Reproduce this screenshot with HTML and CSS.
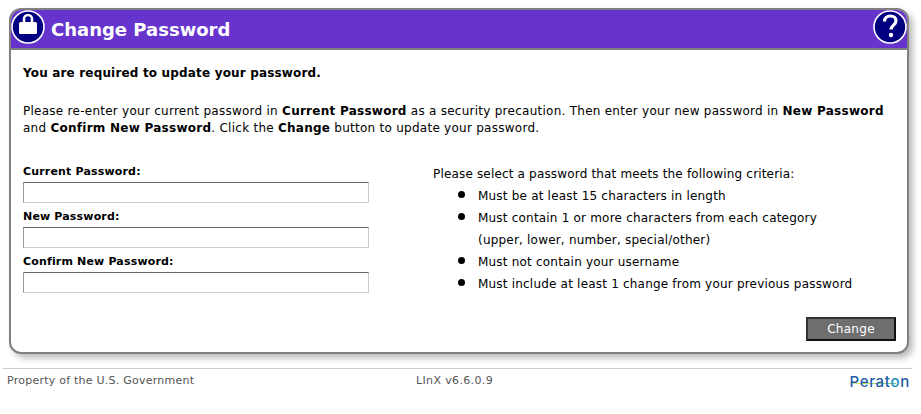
FILE: index.html
```html
<!DOCTYPE html>
<html lang="en">
<head>
<meta charset="utf-8">
<title>Change Password</title>
<link rel="stylesheet" href="styles.css">
</head>
<body>
<main class="panel">
  <header class="head">
    <svg class="badge" viewBox="0 0 34 34" width="34" height="34" aria-hidden="true">
      <circle cx="17" cy="17" r="16" fill="#000080" stroke="#fff" stroke-width="1.600"/>
      <path d="M13 13V9a4 4 0 0 1 8 0v4" fill="none" stroke="#fff" stroke-width="2.600"/>
      <rect x="8" y="12" width="18" height="12" rx="1.500" fill="#fff"/>
    </svg>
    <h1 class="title">Change Password</h1>
    <svg class="badge" viewBox="0 0 34 34" width="34" height="34" aria-hidden="true">
      <circle cx="17" cy="17" r="16" fill="#000080" stroke="#fff" stroke-width="1.600"/>
      <path d="M11.500 11.500c0-3.400 2.400-5.500 5.800-5.500 3.300 0 5.700 1.900 5.700 4.800 0 4.400-5 4.200-5 8.700" fill="none" stroke="#fff" stroke-width="3.200"/>
      <circle cx="18" cy="25" r="2.200" fill="#fff"/>
    </svg>
  </header>
  <div class="body">
    <p class="required">You are required to update your password.</p>
    <p class="intro">Please re-enter your current password in <b>Current Password</b> as a security precaution. Then enter your new password in <b>New Password</b> and <b>Confirm New Password</b>. Click the <b>Change</b> button to update your password.</p>
    <div class="columns">
      <form class="fields">
        <label class="label" for="cur">Current Password:</label>
        <input class="input" id="cur" type="password">
        <label class="label" for="new">New Password:</label>
        <input class="input" id="new" type="password">
        <label class="label" for="conf">Confirm New Password:</label>
        <input class="input" id="conf" type="password">
      </form>
      <div class="criteria">
        <p class="criteria-head">Please select a password that meets the following criteria:</p>
        <ul class="list">
          <li>Must be at least 15 characters in length</li>
          <li>Must contain 1 or more characters from each category<br>(upper, lower, number, special/other)</li>
          <li>Must not contain your username</li>
          <li>Must include at least 1 change from your previous password</li>
        </ul>
      </div>
    </div>
    <div class="actions"><button class="btn" type="button">Change</button></div>
  </div>
</main>
<footer class="foot">
  <span class="foot-left">Property of the U.S. Government</span>
  <span class="foot-mid">LInX v6.6.0.9</span>
  <span class="logo">Perat<span class="logo-o">o</span>n</span>
</footer>
</body>
</html>
```
FILE: styles.css
```css
* { box-sizing: border-box; }
html, body { margin: 0; padding: 0; background: #fff; }
body {
  width: 921px;
  height: 414px;
  overflow: hidden;
  padding-top: 8px;
  font-family: "DejaVu Sans", Verdana, sans-serif;
  font-size: 12px;
  letter-spacing: 0.17px;
  color: #000;
}
.panel {
  width: 900px;
  height: 346px;
  margin-left: 9px;
  border: 2px solid #808080;
  border-radius: 12px;
  box-shadow: 4px 4px 6px #bbb;
  background: #fff;
  overflow: hidden;
}
.head {
  height: 40px;
  display: flex;
  align-items: flex-start;
  justify-content: space-between;
  background: #6633cc;
  border-bottom: 2px solid #808080;
}
.badge { flex: none; }
.title {
  flex: 1;
  margin: 0 0 0 6px;
  font-size: 18px;
  font-weight: bold;
  letter-spacing: 0;
  color: #fff;
  line-height: 40px;
}
.body { padding: 0 12px; }
.required { margin: 15px 0 0; font-weight: bold; line-height: 16px; }
.intro { margin: 22px 0 0; line-height: 17px; letter-spacing: 0.26px; }
.columns { display: flex; margin-top: 27px; }
.fields { width: 410px; display: flex; flex-direction: column; }
.label { font-weight: bold; font-size: 11px; line-height: 15px; height: 18px; }
.input {
  width: 346px;
  height: 21px;
  margin: 0 0 6px;
  padding: 0;
  border: 1px solid #ccc;
  border-top-color: #666;
  border-left-color: #999;
  background: #fff;
}
.criteria { line-height: 22px; margin-top: -1px; }
.criteria-head { margin: 0; }
.list { margin: 0; padding: 0 0 0 45px; list-style: none; letter-spacing: 0.2px; }
.list li::before {
  content: "";
  display: inline-block;
  width: 7px;
  height: 7px;
  margin-left: -20px;
  margin-right: 13px;
  border-radius: 50%;
  background: #000;
  vertical-align: 2px;
}
.actions { display: flex; justify-content: flex-end; margin-top: 18px; margin-right: -1px; }
.btn {
  width: 90px;
  height: 24px;
  padding: 0;
  border: 2px solid;
  border-color: #333 #111 #111 #333;
  background: #6e6e6e;
  color: #fff;
  font: 12px "DejaVu Sans", Verdana, sans-serif;
  letter-spacing: 0.3px;
}
.foot {
  width: 909px;
  margin: 14px 0 0 3px;
  border-top: 1px solid #ccc;
  padding: 5px 2px 0 4px;
  display: flex;
  align-items: flex-start;
  color: #555;
  font-size: 11px;
  letter-spacing: 0.24px;
  line-height: 14px;
}
.foot-left { width: 409px; }
.foot-mid { flex: 1; letter-spacing: 0.36px; }
.logo {
  position: relative;
  isolation: isolate;
  font-family: "Inter", sans-serif;
  font-size: 15px;
  font-weight: 500;
  letter-spacing: 0.7px;
  color: #1f5ba8;
  margin-top: 1px;
}
.logo::before {
  content: "";
  position: absolute;
  z-index: -1;
  left: -5px;
  right: 14px;
  top: 8px;
  height: 1px;
  background: linear-gradient(90deg, #fff, #d4dc50 30%, #6cc3a0);
}
.logo-o { color: #1e8fb8; }
```
